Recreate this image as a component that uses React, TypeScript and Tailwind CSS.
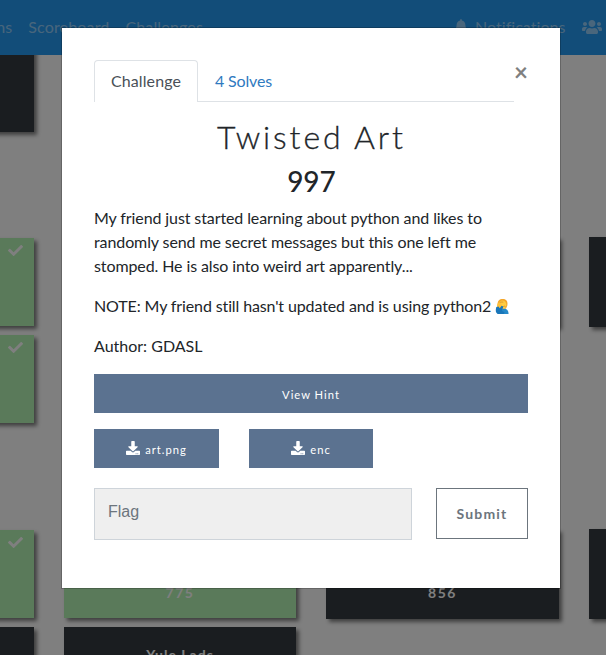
import React from "react";
import { FaBell, FaCheck, FaDownload, FaUsers } from "react-icons/fa";

type CardProps = { solved?: boolean; title?: string; value?: string };

function Card({ solved, title, value }: CardProps) {
  return (
    <div
      className={
        "relative flex flex-col items-center text-[14px] font-bold tracking-[1px] text-white shadow-[3px_3px_4px_rgba(0,0,0,0.5)] " +
        (solved ? "my-px h-[88px] bg-[#b4f4b4]" : "h-[90px] bg-[#343a40]")
      }
    >
      {solved && <FaCheck className="absolute top-[5px] right-[11px] size-[15px]" />}
      <span className="mt-[17px] h-[21px] leading-[21px]">{title}</span>
      <span className={"leading-[21px] tracking-[1.6px] " + (solved ? "mt-[14px]" : "mt-[15px]")}>{value}</span>
    </div>
  );
}

function FacepalmIcon() {
  return (
    <svg viewBox="0 0 32 36" className="ml-1 inline-block h-[17px] w-[14px] align-[-3px]">
      <path d="M6 16C5 5 10 1 18 1s12 6 10 15l-3 7H9z" fill="#f4a62a" />
      <ellipse cx="17" cy="14" rx="9" ry="10" fill="#ffcc42" />
      <path d="M10 10c3-3 6-2 9-2M19 18c2-1 4-1 5 0" stroke="#c97c20" strokeWidth="1.5" fill="none" />
      <path d="M12 27c3-3 6-4 9-4 6 0 10 4 10 12H10z" fill="#2589c9" />
      <path d="M8 9c4-1 8 4 8 10l-5 5-6-4c-1-5 0-8 3-11z" fill="#ffc13b" />
      <path d="M3 19l5-1 3 4 4-6 4 2-3 10 6 3-2 4H6c-5-3-5-9-3-16z" fill="#1976b9" />
    </svg>
  );
}

function Background() {
  return (
    <div className="h-full w-full overflow-hidden bg-white">
      <nav className="relative z-10 flex h-[55px] items-center bg-[#249af2] pb-[2px] text-[16px] leading-6 whitespace-nowrap text-white/50">
        <div className="-ml-[38px] flex w-[241px] gap-4 tracking-[0.15px]">
          <span className="w-[51px] text-right">Teams</span>
          <span>Scoreboard</span>
          <span>Challenges</span>
        </div>
        <div className="ml-[251px] flex items-center">
          <FaBell className="mb-px size-[14px]" />
          <span className="ml-[7px] w-[91px] tracking-[0.04px]">Notifications</span>
          <FaUsers className="ml-[16px] size-[20px]" />
        </div>
      </nav>
      <main className="-ml-[199px] w-[1020px]">
        <div className="-mt-[13px] grid grid-cols-[233px_232px_233px_232px] gap-x-[30px]">
          <Card />
        </div>
        <div className="mt-[105px] grid grid-cols-[233px_232px_233px_232px] gap-x-[30px] gap-y-[7px]">
          <Card solved />
          <Card />
          <Card />
          <Card />
          <Card solved />
        </div>
        <div className="mt-[105px] grid grid-cols-[233px_232px_233px_232px] gap-x-[30px] gap-y-[8px]">
          <Card solved />
          <Card solved value="775" />
          <Card value="856" />
          <Card />
          <Card />
          <Card title="Yule Lads" />
        </div>
      </main>
    </div>
  );
}

function FileButton({ name }: { name: string }) {
  return (
    <button className="flex h-[39px] items-center justify-center gap-[5px] bg-[#5b7290] text-[11.2px] tracking-[1px] text-white">
      <FaDownload className="-mt-px size-[14px]" />
      <span className="pt-[3px]">{name}</span>
    </button>
  );
}

function ChallengeModal() {
  return (
    <div className="h-[562px] w-[500px] border border-black/20 bg-white bg-clip-padding px-8 pt-[32px] text-[#212529]">
      <div className="flex w-[434px] justify-between">
        <div className="flex h-[42px] w-[420px] border-b border-[#dee2e6] text-[16px]">
          <div className="-mb-px flex w-[104px] items-center justify-center rounded-t-[4px] border border-b-0 border-[#dee2e6] bg-white pb-[2px] tracking-[0.1px] text-[#495057]">
            Challenge
          </div>
          <div className="ml-[17px] flex items-center tracking-[-0.15px] text-[#2f7abf]">4 Solves</div>
        </div>
        <button aria-label="Close" className="h-6 text-[24px] leading-[24px] font-bold text-[#808080]">
          ×
        </button>
      </div>
      <h2 className="mt-[15px] pl-px text-center text-[32px] leading-[40px] font-light tracking-[2.9px] [-webkit-text-stroke:0.3px_#212529]">
        Twisted Art
      </h2>
      <h3 className="mt-[7px] pl-px text-center text-[28px] leading-[34px] font-medium">997</h3>
      <div className="mt-[8px] w-[436px] text-[16px] leading-6 tracking-[-0.1px]">
        <p>
          My friend just started learning about python and likes to
          <br />
          randomly send me secret messages but this one left me
          <br />
          stomped. He is also into weird art apparently...
        </p>
        <p className="mt-4 tracking-[-0.12px] whitespace-nowrap">
          NOTE: My friend still hasn't updated and is using python2
          <FacepalmIcon />
        </p>
        <p className="mt-4 tracking-normal">Author: GDASL</p>
      </div>
      <button className="mt-[16px] flex h-[39px] w-[434px] items-center justify-center bg-[#5b7290] pt-[3px] text-[11.2px] tracking-[1px] text-white">
        View Hint
      </button>
      <div className="mt-4 grid grid-cols-[125px_124px] gap-x-[30px]">
        <FileButton name="art.png" />
        <FileButton name="enc" />
      </div>
      <div className="mt-[20px] flex w-[434px] items-start justify-between">
        <input
          placeholder="Flag"
          className="h-[52px] w-[318px] border border-[#ced4da] bg-[#efefef] px-[13px] pb-[4px] font-['Liberation_Sans',sans-serif] text-[16px] placeholder:text-[#6c757d]"
        />
        <button className="h-[51px] w-[92px] border border-[#6c757d] bg-white text-[14px] font-bold tracking-[1.15px] text-[#6c757d]">
          Submit
        </button>
      </div>
    </div>
  );
}

export default function App() {
  return (
    <div className="relative h-[655px] w-[606px] overflow-hidden font-['Lato',sans-serif]">
      <Background />
      <div className="absolute inset-0 z-20 bg-black/50 pt-[27px] pl-[61px]">
        <ChallengeModal />
      </div>
    </div>
  );
}
